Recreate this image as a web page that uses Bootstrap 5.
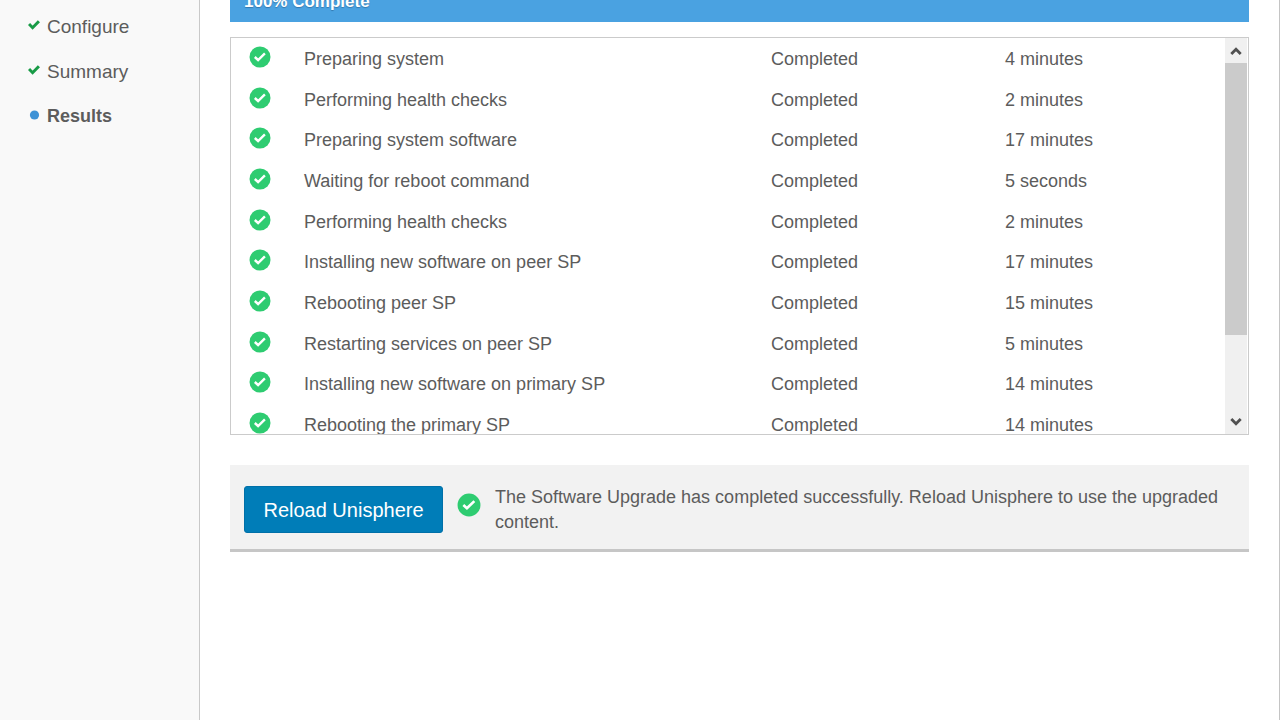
<!DOCTYPE html>
<html lang="en">
<head>
<meta charset="utf-8">
<meta name="viewport" content="width=device-width, initial-scale=1">
<title>Software Upgrade</title>
<link href="https://cdn.jsdelivr.net/npm/bootstrap@5.3.0/dist/css/bootstrap.min.css" rel="stylesheet">
<style>
  body { font-family: "Liberation Sans", Arial, sans-serif; font-size: 18px; line-height: 25px; color: #5c5c5c; }
  .wizard { border-right: 1px solid #c4c4c4; }
  .wizard-steps { width: 200px; background: #f9f9f9; border-right: 1px solid #c9c9c9; padding: 4px 0 0 28px; }
  .wizard-steps li { height: 45px; }
  .wizard-steps a { color: inherit; line-height: 45px; font-size: 19px; }
  .wizard-steps a.current { font-size: 18px; }
  .wizard-steps svg { width: 12px; height: 12px; margin: 0 7px 5px 0; }
  .wizard-main { padding: 0 30px 24px; min-width: 0; }
  /* the progress bar is scrolled partly out of view */
  .upgrade-progress { height: 41px; margin-top: -19px; border-radius: 0; background: #e4e4e4; font-size: 17px; }
  .upgrade-progress .progress-bar { background: #4aa2e1; text-align: left; padding-left: 14px; text-shadow: 0 1px 1px #3478ad; }
  .task-panel { height: 398px; margin-top: 15px; border: 1px solid #cbcbcb; overflow: hidden; }
  .task-table { height: 407px; table-layout: fixed; }
  .task-table td { padding: 2px 0 0; }
  .task-table td.state { padding: 0 0 3px 18px; line-height: 0; }
  .col-state { width: 73px; }
  .col-status { width: 234px; }
  .col-time { width: 220px; }
  .ok { width: 22px; height: 22px; }
  .scroll-rail { width: 22px; margin-right: 1px; background: #f0f0f0; }
  .scroll-rail button { height: 25px; color: #505050; line-height: 0; }
  .scroll-rail svg { width: 12px; height: 10px; }
  .scroll-thumb { height: 272px; background: #cbcbcb; }
  .result-bar { margin-top: 30px; padding: 20px 14px 14px; background: #f2f2f2; border-bottom: 3px solid #c6c6c6; }
  .btn-reload { --bs-btn-bg: #007db8; --bs-btn-border-color: #0070a8; --bs-btn-color: #fff; --bs-btn-hover-bg: #006fa5; --bs-btn-hover-color: #fff;
    --bs-btn-border-radius: 3px; font-size: 20px; width: 199px; height: 47px; margin-top: 1px; }
  .result-icon { width: 24px; height: 24px; margin: 8px 14px 0; }
</style>
</head>
<body class="bg-white overflow-hidden">
<svg class="d-none" aria-hidden="true">
  <symbol id="ok" viewBox="0 0 22 22">
    <circle cx="11" cy="11" r="10.5" fill="#2ecc71"/>
    <path d="M5.8 11l3.3 3 6.8-6.6" fill="none" stroke="#fff" stroke-width="2.4"/>
  </symbol>
  <symbol id="tick" viewBox="0 0 12 12">
    <path d="M1 5l3.6 3.7 6.3-6.5" fill="none" stroke="#189b46" stroke-width="3"/>
  </symbol>
</svg>
<div class="wizard d-flex vh-100">
  <nav class="wizard-steps flex-shrink-0" aria-label="Upgrade steps">
    <ul class="list-unstyled mb-0">
      <li><a href="#configure" class="text-decoration-none"><svg aria-hidden="true"><use href="#tick"/></svg>Configure</a></li>
      <li><a href="#summary" class="text-decoration-none"><svg aria-hidden="true"><use href="#tick"/></svg>Summary</a></li>
      <li><a href="#results" class="current text-decoration-none fw-bold" aria-current="step"><svg viewBox="0 0 12 12" aria-hidden="true"><circle cx="6.5" cy="6" r="4.6" fill="#3d92d6"/></svg>Results</a></li>
    </ul>
  </nav>
  <main class="wizard-main flex-grow-1">
    <div class="progress upgrade-progress" role="progressbar" aria-label="Upgrade progress" aria-valuenow="100" aria-valuemin="0" aria-valuemax="100">
      <div class="progress-bar w-100 fw-bold">100% Complete</div>
    </div>
    <section class="task-panel d-flex" aria-label="Upgrade tasks">
      <div class="flex-grow-1 overflow-hidden">
        <table class="task-table w-100">
          <colgroup><col class="col-state"><col><col class="col-status"><col class="col-time"></colgroup>
          <tbody>
            <tr><td class="state"><svg class="ok" role="img" aria-label="Done"><use href="#ok"/></svg></td><td>Preparing system</td><td>Completed</td><td>4 minutes</td></tr>
            <tr><td class="state"><svg class="ok" role="img" aria-label="Done"><use href="#ok"/></svg></td><td>Performing health checks</td><td>Completed</td><td>2 minutes</td></tr>
            <tr><td class="state"><svg class="ok" role="img" aria-label="Done"><use href="#ok"/></svg></td><td>Preparing system software</td><td>Completed</td><td>17 minutes</td></tr>
            <tr><td class="state"><svg class="ok" role="img" aria-label="Done"><use href="#ok"/></svg></td><td>Waiting for reboot command</td><td>Completed</td><td>5 seconds</td></tr>
            <tr><td class="state"><svg class="ok" role="img" aria-label="Done"><use href="#ok"/></svg></td><td>Performing health checks</td><td>Completed</td><td>2 minutes</td></tr>
            <tr><td class="state"><svg class="ok" role="img" aria-label="Done"><use href="#ok"/></svg></td><td>Installing new software on peer SP</td><td>Completed</td><td>17 minutes</td></tr>
            <tr><td class="state"><svg class="ok" role="img" aria-label="Done"><use href="#ok"/></svg></td><td>Rebooting peer SP</td><td>Completed</td><td>15 minutes</td></tr>
            <tr><td class="state"><svg class="ok" role="img" aria-label="Done"><use href="#ok"/></svg></td><td>Restarting services on peer SP</td><td>Completed</td><td>5 minutes</td></tr>
            <tr><td class="state"><svg class="ok" role="img" aria-label="Done"><use href="#ok"/></svg></td><td>Installing new software on primary SP</td><td>Completed</td><td>14 minutes</td></tr>
            <tr><td class="state"><svg class="ok" role="img" aria-label="Done"><use href="#ok"/></svg></td><td>Rebooting the primary SP</td><td>Completed</td><td>14 minutes</td></tr>
          </tbody>
        </table>
      </div>
      <div class="scroll-rail d-flex flex-column flex-shrink-0">
        <button type="button" class="border-0 bg-transparent p-0" aria-label="Scroll up"><svg viewBox="0 0 12 10" aria-hidden="true"><path d="M1.3 8L6 3.2 10.7 8" fill="none" stroke="currentColor" stroke-width="2.8"/></svg></button>
        <div class="scroll-thumb"></div>
        <button type="button" class="border-0 bg-transparent p-0 mt-auto" aria-label="Scroll down"><svg viewBox="0 0 12 10" aria-hidden="true"><path d="M1.3 2L6 6.8 10.7 2" fill="none" stroke="currentColor" stroke-width="2.8"/></svg></button>
      </div>
    </section>
    <section class="result-bar d-flex align-items-start">
      <button type="button" class="btn btn-reload p-0 flex-shrink-0">Reload Unisphere</button>
      <svg class="result-icon flex-shrink-0" role="img" aria-label="Success"><use href="#ok"/></svg>
      <p class="mb-0">The Software Upgrade has completed successfully. Reload Unisphere to use the upgraded content.</p>
    </section>
  </main>
</div>
<script src="https://cdn.jsdelivr.net/npm/bootstrap@5.3.0/dist/js/bootstrap.bundle.min.js"></script>
</body>
</html>
